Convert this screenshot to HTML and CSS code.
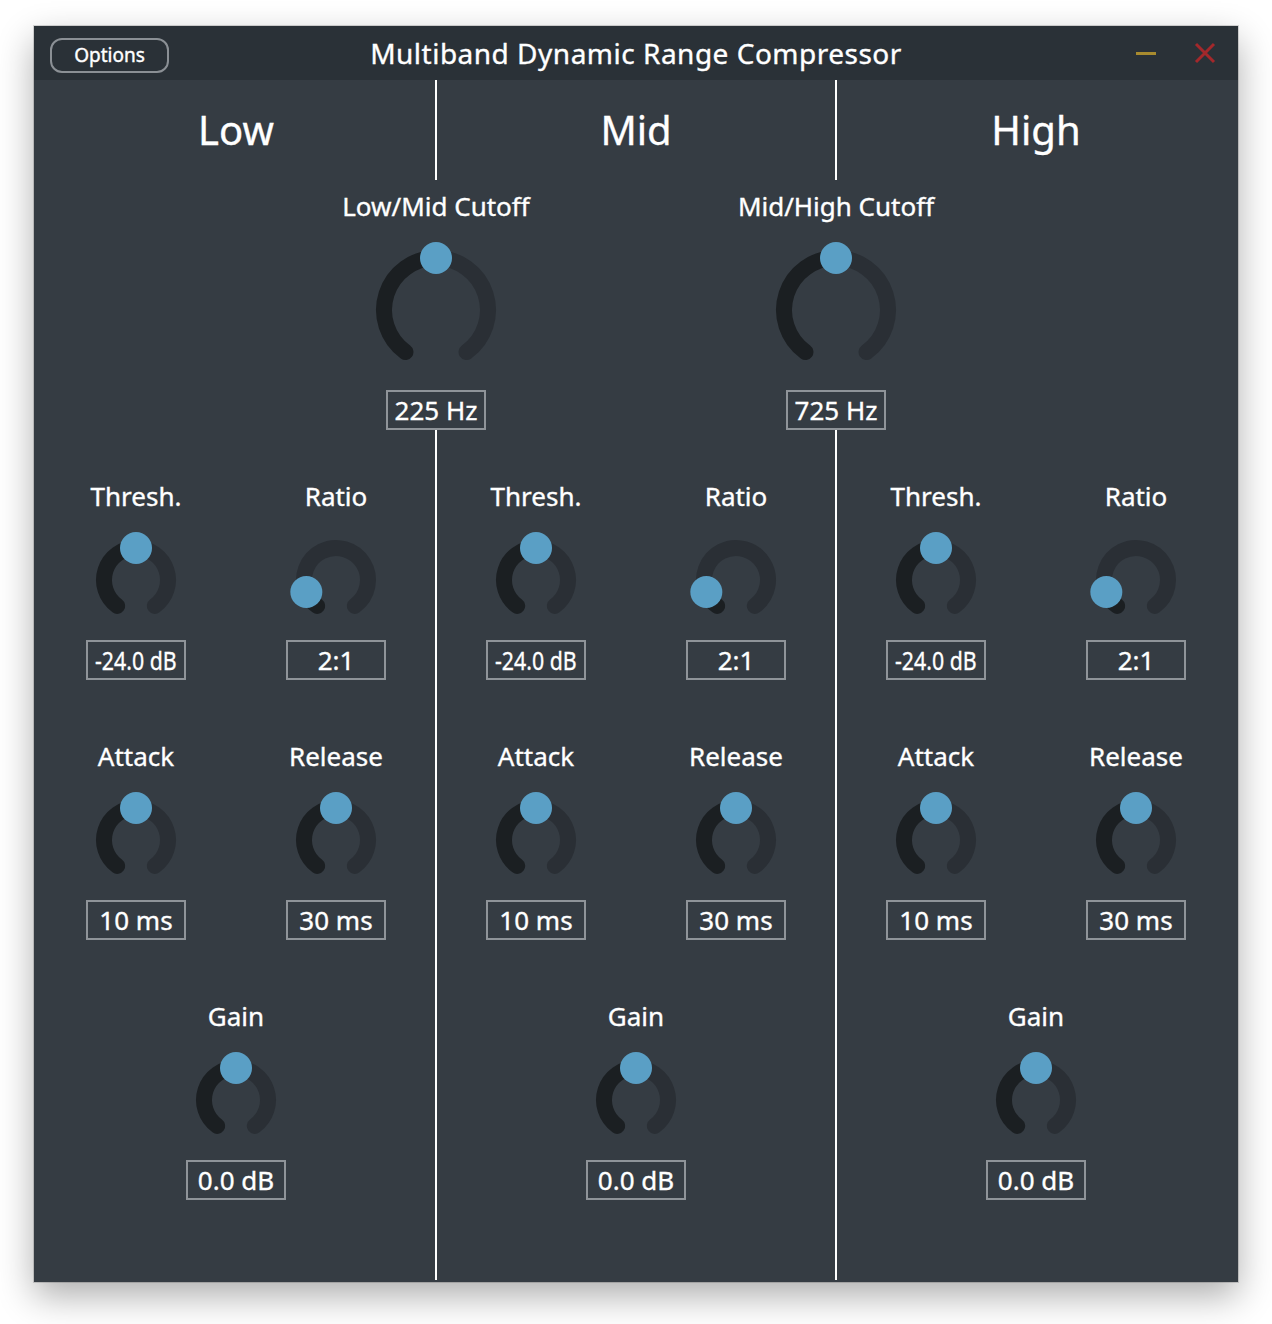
FILE: index.html
```html
<!DOCTYPE html>
<html>
<head>
<meta charset="utf-8">
<link rel="stylesheet" href="styles.css">
</head>
<body>
<div class="window">
  <div class="titlebar">
    <div class="tb-left"><button class="options">Options</button></div>
    <div class="title">Multiband Dynamic Range Compressor</div>
    <div class="tb-right">
      <span class="minimize"></span>
      <svg class="close" width="22" height="22" viewBox="0 0 22 22"><path d="M2 2L20 20M20 2L2 20" stroke="#a3282b" stroke-width="3"/></svg>
    </div>
  </div>
  <div class="content">
    <div class="headrow lined">
      <div class="heading">Low</div>
      <div class="heading">Mid</div>
      <div class="heading">High</div>
    </div>
    <div class="cutrow">
      <div class="ctrl big c1">
        <div class="label">Low/Mid Cutoff</div>
        <svg class="knob-big" width="120" height="128" viewBox="0 0 120 128"><path class="track" d="M60 16A52 52 0 0 1 90.56 110.07"/><path class="fill" d="M29.44 110.07A52 52 0 0 1 60 16"/><circle class="dot" cx="60" cy="16" r="16"/></svg>
        <div class="value">225 Hz</div>
      </div>
      <div class="ctrl big c2">
        <div class="label">Mid/High Cutoff</div>
        <svg class="knob-big" width="120" height="128" viewBox="0 0 120 128"><path class="track" d="M60 16A52 52 0 0 1 90.56 110.07"/><path class="fill" d="M29.44 110.07A52 52 0 0 1 60 16"/><circle class="dot" cx="60" cy="16" r="16"/></svg>
        <div class="value">725 Hz</div>
      </div>
    </div>
    <div class="bandrow lined">
      <div class="band">
        <div class="ctrl"><div class="label">Thresh.</div><svg class="knob" width="80" height="88" viewBox="0 0 80 88"><path class="track" d="M40 16A32 32 0 0 1 58.81 73.89"/><path class="fill" d="M21.19 73.89A32 32 0 0 1 40 16"/><circle class="dot" cx="40" cy="16" r="16"/></svg><div class="value"><span class="narrow">-24.0 dB</span></div></div>
        <div class="ctrl"><div class="label">Ratio</div><svg class="knob" width="80" height="88" viewBox="0 0 80 88"><path class="track" d="M10.33 59.99A32 32 0 1 1 58.81 73.89"/><path class="fill" d="M21.19 73.89A32 32 0 0 1 10.33 59.99"/><circle class="dot" cx="10.33" cy="59.99" r="16"/></svg><div class="value">2:1</div></div>
        <div class="ctrl"><div class="label">Attack</div><svg class="knob" width="80" height="88" viewBox="0 0 80 88"><path class="track" d="M40 16A32 32 0 0 1 58.81 73.89"/><path class="fill" d="M21.19 73.89A32 32 0 0 1 40 16"/><circle class="dot" cx="40" cy="16" r="16"/></svg><div class="value">10 ms</div></div>
        <div class="ctrl"><div class="label">Release</div><svg class="knob" width="80" height="88" viewBox="0 0 80 88"><path class="track" d="M40 16A32 32 0 0 1 58.81 73.89"/><path class="fill" d="M21.19 73.89A32 32 0 0 1 40 16"/><circle class="dot" cx="40" cy="16" r="16"/></svg><div class="value">30 ms</div></div>
        <div class="ctrl gain"><div class="label">Gain</div><svg class="knob" width="80" height="88" viewBox="0 0 80 88"><path class="track" d="M40 16A32 32 0 0 1 58.81 73.89"/><path class="fill" d="M21.19 73.89A32 32 0 0 1 40 16"/><circle class="dot" cx="40" cy="16" r="16"/></svg><div class="value">0.0 dB</div></div>
      </div>
      <div class="band">
        <div class="ctrl"><div class="label">Thresh.</div><svg class="knob" width="80" height="88" viewBox="0 0 80 88"><path class="track" d="M40 16A32 32 0 0 1 58.81 73.89"/><path class="fill" d="M21.19 73.89A32 32 0 0 1 40 16"/><circle class="dot" cx="40" cy="16" r="16"/></svg><div class="value"><span class="narrow">-24.0 dB</span></div></div>
        <div class="ctrl"><div class="label">Ratio</div><svg class="knob" width="80" height="88" viewBox="0 0 80 88"><path class="track" d="M10.33 59.99A32 32 0 1 1 58.81 73.89"/><path class="fill" d="M21.19 73.89A32 32 0 0 1 10.33 59.99"/><circle class="dot" cx="10.33" cy="59.99" r="16"/></svg><div class="value">2:1</div></div>
        <div class="ctrl"><div class="label">Attack</div><svg class="knob" width="80" height="88" viewBox="0 0 80 88"><path class="track" d="M40 16A32 32 0 0 1 58.81 73.89"/><path class="fill" d="M21.19 73.89A32 32 0 0 1 40 16"/><circle class="dot" cx="40" cy="16" r="16"/></svg><div class="value">10 ms</div></div>
        <div class="ctrl"><div class="label">Release</div><svg class="knob" width="80" height="88" viewBox="0 0 80 88"><path class="track" d="M40 16A32 32 0 0 1 58.81 73.89"/><path class="fill" d="M21.19 73.89A32 32 0 0 1 40 16"/><circle class="dot" cx="40" cy="16" r="16"/></svg><div class="value">30 ms</div></div>
        <div class="ctrl gain"><div class="label">Gain</div><svg class="knob" width="80" height="88" viewBox="0 0 80 88"><path class="track" d="M40 16A32 32 0 0 1 58.81 73.89"/><path class="fill" d="M21.19 73.89A32 32 0 0 1 40 16"/><circle class="dot" cx="40" cy="16" r="16"/></svg><div class="value">0.0 dB</div></div>
      </div>
      <div class="band">
        <div class="ctrl"><div class="label">Thresh.</div><svg class="knob" width="80" height="88" viewBox="0 0 80 88"><path class="track" d="M40 16A32 32 0 0 1 58.81 73.89"/><path class="fill" d="M21.19 73.89A32 32 0 0 1 40 16"/><circle class="dot" cx="40" cy="16" r="16"/></svg><div class="value"><span class="narrow">-24.0 dB</span></div></div>
        <div class="ctrl"><div class="label">Ratio</div><svg class="knob" width="80" height="88" viewBox="0 0 80 88"><path class="track" d="M10.33 59.99A32 32 0 1 1 58.81 73.89"/><path class="fill" d="M21.19 73.89A32 32 0 0 1 10.33 59.99"/><circle class="dot" cx="10.33" cy="59.99" r="16"/></svg><div class="value">2:1</div></div>
        <div class="ctrl"><div class="label">Attack</div><svg class="knob" width="80" height="88" viewBox="0 0 80 88"><path class="track" d="M40 16A32 32 0 0 1 58.81 73.89"/><path class="fill" d="M21.19 73.89A32 32 0 0 1 40 16"/><circle class="dot" cx="40" cy="16" r="16"/></svg><div class="value">10 ms</div></div>
        <div class="ctrl"><div class="label">Release</div><svg class="knob" width="80" height="88" viewBox="0 0 80 88"><path class="track" d="M40 16A32 32 0 0 1 58.81 73.89"/><path class="fill" d="M21.19 73.89A32 32 0 0 1 40 16"/><circle class="dot" cx="40" cy="16" r="16"/></svg><div class="value">30 ms</div></div>
        <div class="ctrl gain"><div class="label">Gain</div><svg class="knob" width="80" height="88" viewBox="0 0 80 88"><path class="track" d="M40 16A32 32 0 0 1 58.81 73.89"/><path class="fill" d="M21.19 73.89A32 32 0 0 1 40 16"/><circle class="dot" cx="40" cy="16" r="16"/></svg><div class="value">0.0 dB</div></div>
      </div>
    </div>
  </div>
</div>
</body>
</html>
```
FILE: styles.css
```css
* { box-sizing: border-box; }
html, body { margin: 0; padding: 0; background: #ffffff; }
body {
  padding: 26px 0 50px 34px;
  font-family: "Noto Sans", "Open Sans", sans-serif;
  color: #ffffff;
  -webkit-text-stroke: 0.35px #ffffff;
}
.window {
  width: 1204px;
  height: 1256px;
  background: #353c43;
  box-shadow: 0 14px 34px rgba(0,0,0,0.32), 0 0 0 1px rgba(0,0,0,0.15);
  display: flex;
  flex-direction: column;
}
.titlebar {
  height: 54px;
  background: #2a3137;
  display: grid;
  grid-template-columns: 1fr auto 1fr;
  align-items: center;
}
.tb-left { padding: 4px 0 0 16px; }
.options {
  width: 119px;
  height: 35px;
  border: 2px solid #8b9095;
  border-radius: 12px;
  background: #2a3137;
  color: #ffffff;
  font-family: "Noto Sans", "Open Sans", sans-serif;
  font-size: 19px;
  padding: 0;
  line-height: 31px;
  -webkit-text-stroke: 0.4px #ffffff;
}
.title {
  font-size: 28px;
  line-height: 54px;
  letter-spacing: 0.5px;
}
.tb-right {
  display: flex;
  justify-content: flex-end;
  align-items: center;
  gap: 38px;
  padding-right: 22px;
}
.minimize {
  width: 20px;
  height: 3px;
  background: #a88b2f;
}
.close { display: block; }
.content {
  flex: 1;
  padding: 0 2px 2px;
  display: flex;
  flex-direction: column;
}
.lined {
  background-image: linear-gradient(#ffffff, #ffffff), linear-gradient(#ffffff, #ffffff);
  background-size: 2px 100%, 2px 100%;
  background-position: 399px 0, 799px 0;
  background-repeat: no-repeat;
}
.headrow {
  height: 100px;
  display: grid;
  grid-template-columns: repeat(3, 400px);
}
.heading {
  text-align: center;
  font-size: 40px;
  line-height: 100px;
}
.cutrow {
  height: 250px;
  display: grid;
  grid-template-columns: repeat(6, 200px);
}
.c1 { grid-column: 2 / span 2; }
.c2 { grid-column: 4 / span 2; }
.ctrl {
  display: flex;
  flex-direction: column;
  align-items: center;
}
.big .label {
  font-size: 26px;
  line-height: 52px;
  height: 54px;
}
.knob-big { margin-top: 8px; overflow: visible; }
.big .value { margin-top: 20px; }
.bandrow {
  flex: 1;
  display: grid;
  grid-template-columns: repeat(3, 400px);
}
.band {
  display: grid;
  grid-template-columns: repeat(2, 200px);
  align-content: start;
  row-gap: 62px;
  padding-top: 52px;
}
.gain { grid-column: 1 / span 2; }
.label {
  font-size: 26px;
  line-height: 28px;
  height: 30px;
  white-space: nowrap;
}
.knob { margin-top: 20px; overflow: visible; }
.value {
  width: 100px;
  height: 40px;
  margin-top: 20px;
  border: 2px solid #8f9499;
  font-size: 26px;
  line-height: 36px;
  text-align: center;
  white-space: nowrap;
}
.narrow {
  display: inline-block;
  transform: scaleX(0.82);
  margin: 0 -12px;
}
.track {
  fill: none;
  stroke: #2a2f35;
  stroke-width: 16;
  stroke-linecap: round;
}
.fill {
  fill: none;
  stroke: #1b1f22;
  stroke-width: 16;
  stroke-linecap: round;
}
.dot { fill: #5a9fc5; }
```
